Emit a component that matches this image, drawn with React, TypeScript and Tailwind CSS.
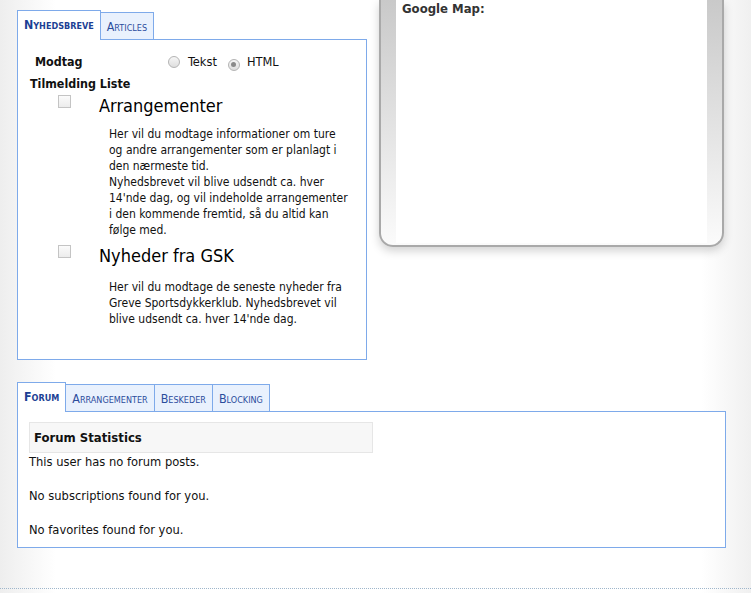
import React from 'react';

const font = "font-['DejaVu_Sans_Condensed','DejaVu_Sans',sans-serif] font-stretch-condensed";

const Radio = ({ checked }: { checked?: boolean }) => (
  <span className="inline-flex h-[12px] w-[12px] items-center justify-center rounded-full border border-[#b4b4b4] bg-[linear-gradient(#f6f6f6,#dedede)]">
    {checked && <span className="h-[5px] w-[5px] rounded-full bg-[#8a8a8a]" />}
  </span>
);

const Checkbox = () => (
  <span className="block h-[13px] w-[13px] border border-[#c4c4c4] bg-[linear-gradient(#fbfbfb,#ececec)]" />
);

const Tab = ({ label, active }: { label: string; active?: boolean }) =>
  active ? (
    <div className="relative z-10 -mb-px flex h-[30px] items-center border border-b-0 border-[#7eaaea] bg-white px-[6px] text-[12.3px] font-bold text-[#1c3f94] [font-variant:small-caps]">
      {label}
    </div>
  ) : (
    <div className="flex h-[27px] items-center border border-b-0 border-l-0 border-[#7eaaea] bg-[#e9f1fd] px-[6px] pt-[2px] text-[12.4px] text-[#2b4c9c] [font-variant:small-caps]">
      {label}
    </div>
  );

const NewsItem = ({ title, gap, children }: { title: string; gap: string; children: React.ReactNode }) => (
  <div>
    <div className="flex h-[22px] items-start">
      <div className="ml-[40px] mt-[1px] w-[41px]">
        <Checkbox />
      </div>
      <span className="mt-[2px] text-[18px] leading-[20px] text-black">{title}</span>
    </div>
    <div className={`ml-[91px] w-[240px] text-[12px] leading-[16px] text-[#111] ${gap}`}>{children}</div>
  </div>
);

export default function App() {
  return (
    <div
      className={`${font} relative min-h-[593px] w-full bg-[linear-gradient(to_right,#eeeeee,#ffffff_56px,#ffffff_calc(100%_-_50px),#f0f0f0)]`}
    >
      <div className="flex gap-[12px] pl-[17px]">
        {/* newsletter tabs */}
        <div className="w-[350px] pt-[10px]">
          <div className="flex items-end">
            <Tab label="Nyhedsbreve" active />
            <Tab label="Articles" />
          </div>
          <div className="h-[321px] border border-[#7eaaea] bg-white">
            <div className="mt-[14px] flex h-[16px] items-center">
              <span className="ml-[17px] w-[133px] text-[12.4px] font-bold text-[#111]">Modtag</span>
              <Radio />
              <span className="ml-[8px] text-[12.7px] text-[#111]">Tekst</span>
              <span className="ml-[11px]">
                <Radio checked />
              </span>
              <span className="ml-[7px] text-[12.7px] text-[#111]">HTML</span>
            </div>
            <div className="ml-[12px] mt-[6px] text-[12.4px] font-bold leading-[16px] text-[#111]">Tilmelding Liste</div>
            <div className="mt-[2px]">
              <NewsItem title="Arrangementer" gap="mt-[10px]">
                Her vil du modtage informationer om ture og andre arrangementer som er planlagt i den nærmeste tid.
                <br />
                Nyhedsbrevet vil blive udsendt ca. hver 14'nde dag, og vil indeholde arrangementer i den kommende
                fremtid, så du altid kan følge med.
              </NewsItem>
            </div>
            <div className="mt-[6px]">
              <NewsItem title="Nyheder fra GSK" gap="mt-[13px]">
                Her vil du modtage de seneste nyheder fra Greve Sportsdykkerklub. Nyhedsbrevet vil blive udsendt ca.
                hver 14'nde dag.
              </NewsItem>
            </div>
          </div>
        </div>

        {/* google map box */}
        <div className="h-[247px] w-[345px] rounded-b-[14px] border-2 border-t-0 border-[#a9a9a9] bg-[linear-gradient(#c9c9c9,#fbfbfb)] px-[15px] pb-[2px] shadow-[0_4px_10px_rgba(0,0,0,0.18)]">
          <div className="h-full bg-white px-[6px] pt-px">
            <div className="text-[13px] font-bold leading-[16px] text-[#333]">Google Map:</div>
          </div>
        </div>
      </div>

      {/* profile tabs */}
      <div className="ml-[17px] mt-[22px] w-[709px]">
        <div className="flex items-end">
          <Tab label="Forum" active />
          <Tab label="Arrangementer" />
          <Tab label="Beskeder" />
          <Tab label="Blocking" />
        </div>
        <div className="h-[137px] border border-[#7eaaea] bg-white px-[11px] pt-[10px] text-[12.8px] text-[#111]">
          <div className="flex h-[31px] w-[344px] items-center border border-[#e6e6e6] bg-[#f7f7f7] px-[4px] text-[13px] font-bold">
            Forum Statistics
          </div>
          <p className="mt-[1px] leading-[16px]">This user has no forum posts.</p>
          <p className="mt-[18px] leading-[16px]">No subscriptions found for you.</p>
          <p className="mt-[18px] leading-[16px]">No favorites found for you.</p>
        </div>
      </div>

      <div className="absolute left-0 right-0 top-[588px] border-t border-dotted border-[#9fb6cb]" />
    </div>
  );
}
